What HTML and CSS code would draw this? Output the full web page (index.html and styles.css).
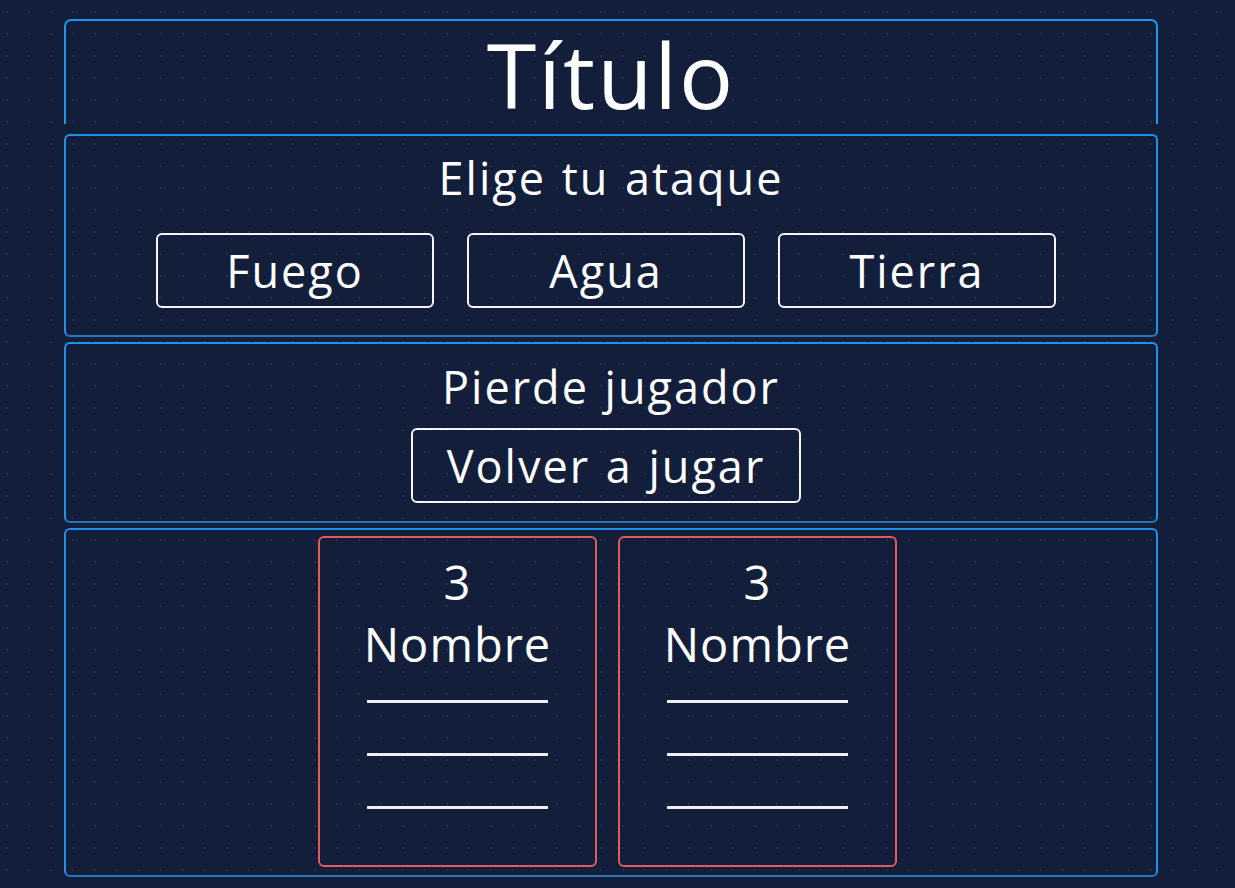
FILE: index.html
```html
<!DOCTYPE html>
<html lang="es">
<head>
<meta charset="utf-8">
<title>Título</title>
<link rel="stylesheet" href="styles.css">
</head>
<body>
<main class="app">
  <header class="header">
    <h1 class="title">Título</h1>
  </header>
  <section class="panel attack">
    <h2 class="heading">Elige tu ataque</h2>
    <div class="button-row">
      <button class="btn btn-attack">Fuego</button>
      <button class="btn btn-attack">Agua</button>
      <button class="btn btn-attack">Tierra</button>
    </div>
  </section>
  <section class="panel result">
    <h2 class="heading">Pierde jugador</h2>
    <div class="button-row">
      <button class="btn btn-restart">Volver a jugar</button>
    </div>
  </section>
  <section class="panel players">
    <div class="card">
      <div class="lives">3</div>
      <div class="name">Nombre</div>
      <div class="line"></div>
      <div class="line"></div>
      <div class="line"></div>
    </div>
    <div class="card">
      <div class="lives">3</div>
      <div class="name">Nombre</div>
      <div class="line"></div>
      <div class="line"></div>
      <div class="line"></div>
    </div>
  </section>
</main>
</body>
</html>
```

FILE: styles.css
```css
html, body {
  margin: 0;
  padding: 0;
}

body {
  background-color: #131e3b;
  background-image: radial-gradient(circle, #1f2c55 1.1px, transparent 1.6px);
  background-size: 22px 22px;
  background-position: -4px 1px;
  color: #ffffff;
  font-family: "Open Sans", "Noto Sans", sans-serif;
  min-height: 888px;
}

.app {
  width: 1094px;
  margin-left: 64px;
  padding-top: 19px;
  display: flex;
  flex-direction: column;
}

.header {
  box-sizing: border-box;
  height: 105px;
  border: 2px solid #2196ee;
  border-bottom: none;
  border-radius: 7px 7px 0 0;
  margin-bottom: 10px;
  display: flex;
  justify-content: center;
  align-items: center;
}

.title {
  margin: 0;
  font-weight: 400;
  font-size: 90px;
  line-height: 100px;
  padding-top: 2px;
  letter-spacing: 2px;
}

.panel {
  border: 2px solid #2092e8;
  border-bottom-color: #2a73b8;
  border-radius: 6px;
  margin-bottom: 5px;
}

.heading {
  margin: 0;
  text-align: center;
  font-weight: 400;
  font-size: 45px;
  line-height: 56px;
  letter-spacing: 2px;
  word-spacing: 2px;
}

.attack {
  padding: 14px 0 27px;
}

.attack .heading {
  margin-bottom: 27px;
}

.result {
  padding: 15px 0 18px;
}

.result .heading {
  margin-bottom: 13px;
}

.button-row {
  display: flex;
  justify-content: center;
  gap: 33px;
  padding-right: 10px;
}

.btn {
  box-sizing: border-box;
  height: 75px;
  background: transparent;
  color: #ffffff;
  border: 2px solid #f4f5f8;
  border-radius: 6px;
  font-family: inherit;
  font-size: 45px;
  letter-spacing: 2px;
  word-spacing: 2px;
  padding: 0;
  cursor: pointer;
}

.btn-attack {
  width: 278px;
}

.btn-restart {
  width: 390px;
}

.players {
  display: flex;
  justify-content: center;
  gap: 21px;
  padding: 6px 7px 8px 0;
}

.card {
  box-sizing: border-box;
  width: 279px;
  height: 331px;
  border: 2px solid #e05c5c;
  border-radius: 6px;
  display: flex;
  flex-direction: column;
  align-items: center;
  padding-top: 14px;
}

.lives,
.name {
  font-size: 47px;
  line-height: 60px;
  letter-spacing: 1px;
}

.name {
  line-height: 64px;
  margin-bottom: 24px;
}

.line {
  width: 181px;
  height: 3px;
  background: #eef0f6;
  margin-bottom: 50px;
}
```
